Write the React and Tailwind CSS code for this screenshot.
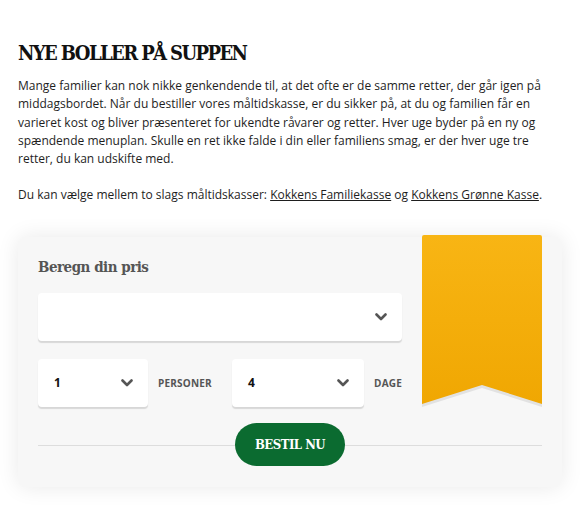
import React from 'react'

const slab = { fontFamily: '"DejaVu Serif", "Liberation Serif", serif', fontStretch: 'condensed' }

function Chevron() {
  return (
    <svg width="12" height="8" viewBox="0 0 12 8" className="shrink-0">
      <polyline points="1.5,1.5 6,6 10.5,1.5" fill="none" stroke="#555" strokeWidth="2.6" strokeLinecap="round" strokeLinejoin="round" />
    </svg>
  )
}

function Select({ value, className = '' }) {
  return (
    <div className={`h-[48px] bg-white rounded-[4px] shadow-[0_2px_1px_rgba(0,0,0,0.13)] flex items-center justify-between pl-4 pr-[15px] ${className}`}>
      <span className="text-[12px] font-bold text-[#111]">{value}</span>
      <Chevron />
    </div>
  )
}

function Ribbon() {
  return (
    <svg width="120" height="173" viewBox="0 0 120 173" className="block">
      <defs>
        <linearGradient id="rib" x1="0" y1="0" x2="0" y2="1">
          <stop offset="0" stopColor="#f8b514" />
          <stop offset="1" stopColor="#f0a702" />
        </linearGradient>
      </defs>
      <polygon points="0,10 120,10 120,172 60,153 0,172" fill="#e2e2e2" />
      <path d="M2,0 H118 Q120,0 120,2 V169 L60,150 L0,169 V2 Q0,0 2,0 Z" fill="url(#rib)" />
    </svg>
  )
}

export default function App() {
  return (
    <div className="min-h-screen bg-white text-[#1e1e1e]" style={{ fontFamily: '"Open Sans", sans-serif' }}>
      <div className="px-[18px] pt-[41px] pb-6">
        <h1 className="text-[20px] leading-[24px] font-bold text-[#111] tracking-[-1.6px]" style={slab}>NYE BOLLER PÅ SUPPEN</h1>
        <p className="mt-[12px] w-[545px] text-[12px] leading-[18.25px]">
          Mange familier kan nok nikke genkendende til, at det ofte er de samme retter, der går igen på middagsbordet. Når du bestiller vores måltidskasse, er du sikker på, at du og familien får en varieret kost og bliver præsenteret for ukendte råvarer og retter. Hver uge byder på en ny og spændende menuplan. Skulle en ret ikke falde i din eller familiens smag, er der hver uge tre retter, du kan udskifte med.
        </p>
        <p className="mt-[18px] text-[12px] leading-[18px]">
          Du kan vælge mellem to slags måltidskasser: <a className="underline">Kokkens Familiekasse</a> og <a className="underline">Kokkens Grønne Kasse</a>.
        </p>

        <div className="mt-[33px] w-[544px] bg-[#f7f7f7] rounded-[8px] shadow-[0_0_22px_rgba(0,0,0,0.09)] px-5 pb-[21px]">
          <div className="flex gap-5">
            <div className="flex-1 pt-5">
              <h2 className="text-[15px] leading-[20px] font-bold text-[#555] tracking-[-0.5px]" style={slab}>Beregn din pris</h2>
              <Select value="" className="mt-4" />
              <div className="mt-[18px] flex items-center">
                <Select value="1" className="w-[110px]" />
                <span className="ml-[10px] text-[10px] font-bold text-[#555] tracking-[0.2px]">PERSONER</span>
                <Select value="4" className="ml-5 flex-1" />
                <span className="ml-[10px] text-[10px] font-bold text-[#555] tracking-[0.2px]">DAGE</span>
              </div>
            </div>
            <div className="w-[120px] mt-[-2px]">
              <Ribbon />
            </div>
          </div>
          <div className="relative mt-[15px] flex justify-center">
            <div className="absolute left-0 right-0 top-1/2 h-px bg-[#dddddd]" />
            <button className="relative w-[110px] h-[43px] rounded-full bg-[#0b6b30] text-white text-[13px] font-bold tracking-[-0.5px]" style={slab}>BESTIL NU</button>
          </div>
        </div>
      </div>
    </div>
  )
}
